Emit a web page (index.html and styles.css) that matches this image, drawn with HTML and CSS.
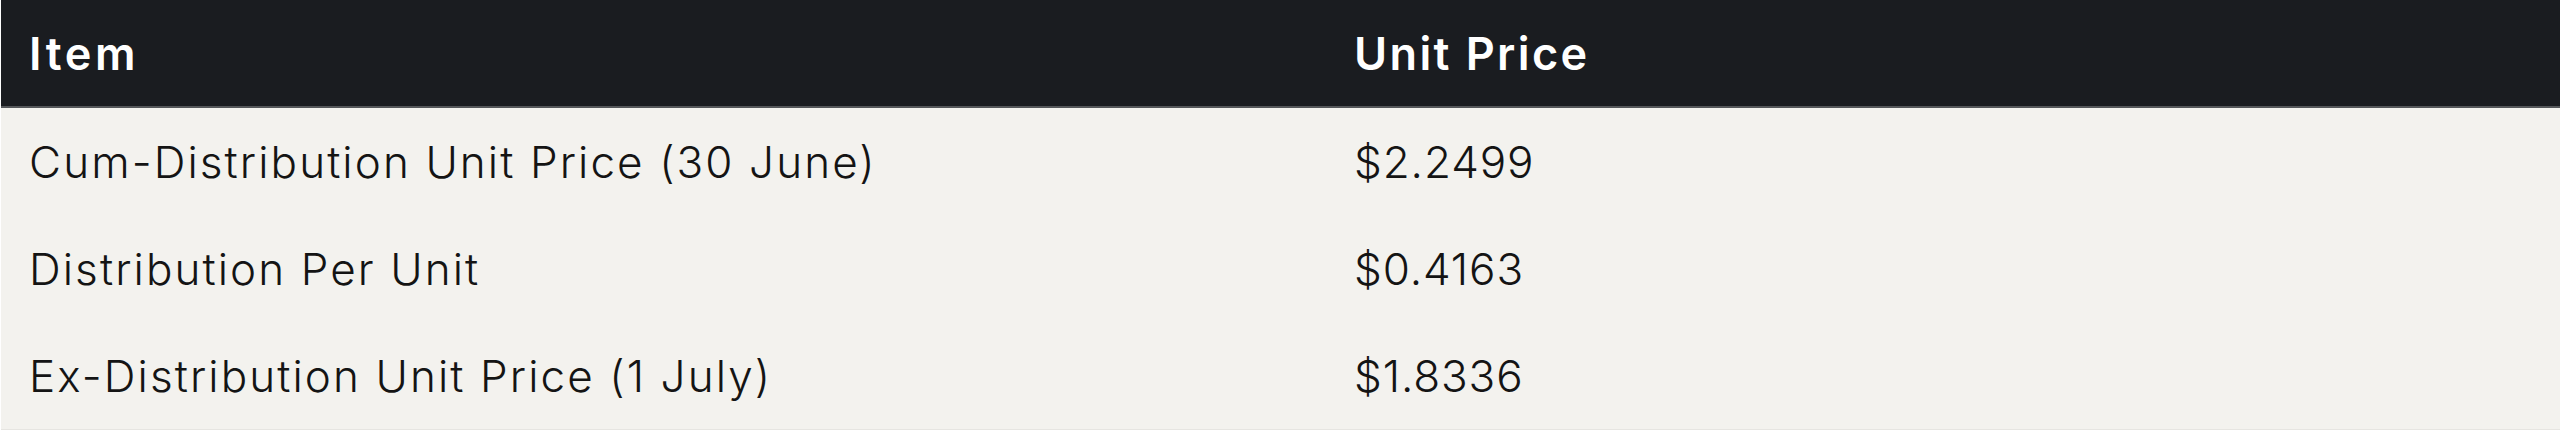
FILE: index.html
```html
<!DOCTYPE html>
<html lang="en">
<head>
<meta charset="utf-8">
<title>Distribution</title>
<link rel="stylesheet" href="styles.css">
</head>
<body>
<div class="table" role="table">
  <div class="row head" role="row">
    <div class="cell item" role="columnheader">Item</div>
    <div class="cell" role="columnheader">Unit Price</div>
  </div>
  <div class="row" role="row">
    <div class="cell" role="cell">Cum-Distribution Unit Price (30 June)</div>
    <div class="cell num" role="cell">$2.2499</div>
  </div>
  <div class="row" role="row">
    <div class="cell" role="cell">Distribution Per Unit</div>
    <div class="cell num" role="cell">$0.4163</div>
  </div>
  <div class="row" role="row">
    <div class="cell" role="cell">Ex-Distribution Unit Price (1 July)</div>
    <div class="cell num" role="cell">$1.8336</div>
  </div>
</div>
</body>
</html>
```
FILE: styles.css
```css
html, body {
  margin: 0;
  padding: 0;
  background: #ffffff;
}
body {
  padding-left: 1px;
  font-family: Inter, "Noto Sans", sans-serif;
}
.table {
  display: flex;
  flex-direction: column;
  background: #f3f2ee;
  border-bottom: 1px solid #e6e5e1;
}
.row {
  display: grid;
  grid-template-columns: 1325px 1fr;
  height: 107px;
  align-items: center;
}
.row.head {
  background: #1a1c20;
  color: #ffffff;
  border-bottom: 2px solid #55575a;
  height: 106px;
}
.cell {
  padding: 0 28px;
  font-size: 44px;
  font-weight: 300;
  color: #141414;
  line-height: 1;
  letter-spacing: 2.1px;
}
.cell.num {
  letter-spacing: 0.9px;
}
.head .cell {
  color: #ffffff;
  font-weight: 600;
  font-size: 45px;
  letter-spacing: 2.4px;
}
.head .cell.item {
  letter-spacing: 3.6px;
}
```
